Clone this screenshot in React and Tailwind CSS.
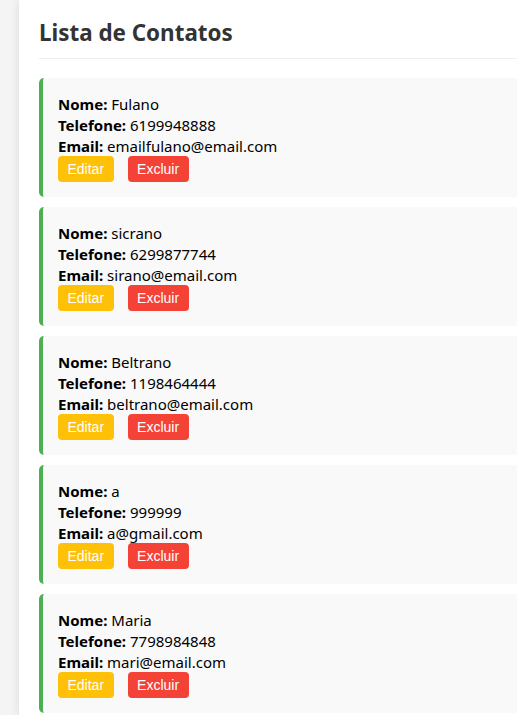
const contatos = [
  { nome: 'Fulano', telefone: '6199948888', email: 'emailfulano@email.com' },
  { nome: 'sicrano', telefone: '6299877744', email: 'sirano@email.com' },
  { nome: 'Beltrano', telefone: '1198464444', email: 'beltrano@email.com' },
  { nome: 'a', telefone: '999999', email: 'a@gmail.com' },
  { nome: 'Maria', telefone: '7798984848', email: 'mari@email.com' },
];

const ContatoCard = ({ contato }) => (
  <li className="mb-[10px] rounded-[5px] border-l-4 border-[#4caf50] bg-[#f9f9f9] pt-[16px] pb-[15px] pl-[15px]">
    <div>
      <strong>Nome:</strong> {contato.nome}
    </div>
    <div>
      <strong>Telefone:</strong> {contato.telefone}
    </div>
    <div>
      <strong>Email:</strong> {contato.email}
    </div>
    <div className="-mt-[1px] flex items-center">
      <button className="mr-[14px] h-[26px] rounded-[4px] bg-[#ffc107] px-[9.5px] text-[14px] text-white font-['Liberation_Sans',Arial,sans-serif]">
        Editar
      </button>
      <button className="h-[26px] rounded-[4px] bg-[#f44336] px-[9.5px] text-[14px] text-white font-['Liberation_Sans',Arial,sans-serif]">
        Excluir
      </button>
    </div>
  </li>
);

export default function App() {
  return (
    <div className="flex h-[715px] overflow-hidden bg-[#f4f4f4] font-['Noto_Sans',sans-serif] text-[15px] leading-[21px] text-black">
      <div className="ml-[19px] w-[620px] shrink-0 bg-white p-[20px] shadow-[0_0_10px_rgba(0,0,0,0.1)]">
        <h2 className="border-b border-[#eee] pb-[12px] text-[22.4px] leading-[26px] font-bold text-[#333]">
          Lista de Contatos
        </h2>
        <ul className="mt-[19px]">
          {contatos.map((c) => (
            <ContatoCard key={c.nome} contato={c} />
          ))}
        </ul>
      </div>
    </div>
  );
}
